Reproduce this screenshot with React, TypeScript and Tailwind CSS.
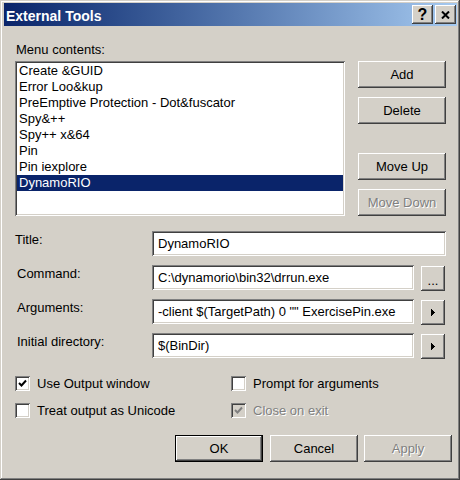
import React from 'react';

const RAISED = 'shadow-[inset_-1px_-1px_#404040,inset_1px_1px_#ffffff,inset_-2px_-2px_#808080,inset_2px_2px_#d4d0c8]';
const DEFAULT_BTN = 'shadow-[inset_0_0_0_1px_#000000,inset_-2px_-2px_#404040,inset_2px_2px_#ffffff,inset_-3px_-3px_#808080]';
const SUNKEN = 'shadow-[inset_1px_1px_#808080,inset_-1px_-1px_#ffffff,inset_2px_2px_#404040,inset_-2px_-2px_#d4d0c8]';
const DISABLED_TEXT = 'text-[#808080] [text-shadow:1px_1px_0_#ffffff]';

const items = [
  'Create &GUID',
  'Error Loo&kup',
  'PreEmptive Protection - Dot&fuscator',
  'Spy&++',
  'Spy++ x&64',
  'Pin',
  'Pin iexplore',
  'DynamoRIO',
];

const Button = ({ label, disabled, isDefault, className = '' }: { label: string; disabled?: boolean; isDefault?: boolean; className?: string }) => (
  <div
    className={`h-[27px] w-[88px] bg-[#d4d0c8] flex items-center justify-center leading-[16px] ${isDefault ? DEFAULT_BTN : RAISED} ${disabled ? DISABLED_TEXT : ''} ${className}`}
  >
    {label}
  </div>
);

const Arrow = () => (
  <svg width="4" height="7" viewBox="0 0 4 7" shapeRendering="crispEdges">
    <path d="M0 0h1v1h1v1h1v1h1v1h-1v1h-1v1h-1v1h-1z" fill="#000" />
  </svg>
);

const Check = ({ color }: { color: string }) => (
  <svg width="9" height="9" viewBox="0 0 9 9">
    <polyline points="1,4 3.5,6.5 8,1.5" fill="none" stroke={color} strokeWidth="2" />
  </svg>
);

const Checkbox = ({ label, checked, disabled }: { label: string; checked?: boolean; disabled?: boolean }) => (
  <div className="flex items-center h-[15px]">
    <div className={`w-[15px] h-[15px] flex items-center justify-center ${SUNKEN} ${disabled ? 'bg-[#d4d0c8]' : 'bg-white'}`}>
      {checked && <Check color={disabled ? '#808080' : '#000'} />}
    </div>
    <span className={`ml-[7px] leading-[16px] whitespace-nowrap ${disabled ? DISABLED_TEXT : ''}`}>{label}</span>
  </div>
);

const Field = ({ label, value, labelPad, width, side }: { label: string; value: string; labelPad: string; width: string; side?: React.ReactNode }) => (
  <div className="flex h-[25px]">
    <div className={`w-[152px] mt-[1px] leading-[16px] ${labelPad}`}>{label}</div>
    <div className={`${width} h-[25px] bg-white ${SUNKEN} flex items-center pl-[6px] leading-[16px] whitespace-nowrap overflow-hidden`}>
      {value}
    </div>
    {side && (
      <div className={`ml-[7px] mt-[1px] w-[24px] h-[25px] bg-[#d4d0c8] ${RAISED} flex items-center justify-center`}>{side}</div>
    )}
  </div>
);

export default function App() {
  return (
    <div className="w-[460px] h-[480px] bg-[#d4d0c8] flex flex-col text-[13px] text-black font-['Liberation_Sans',Arial,sans-serif] shadow-[inset_-1px_-1px_#404040,inset_1px_1px_#d4d0c8,inset_-2px_-2px_#808080,inset_2px_2px_#ffffff]">
      {/* caption */}
      <div className="mt-[3px] ml-[4px] mr-[3px] h-[23px] bg-gradient-to-r from-[#0a246a] to-[#a6caf0] flex items-start">
        <span className="mt-[5px] pl-[2px] text-white font-bold text-[14px] leading-[16px]">External Tools</span>
        <div className="ml-auto mr-[1px] mt-[2px] flex gap-[2px]">
          <div className={`w-[21px] h-[19px] bg-[#d4d0c8] ${RAISED} flex items-center justify-center font-bold text-[16px] leading-none pt-[1px]`}>?</div>
          <div className={`w-[21px] h-[19px] bg-[#d4d0c8] ${RAISED} flex items-center justify-center`}>
            <svg width="9" height="8" viewBox="0 0 9 8">
              <path d="M1 0.5L8 7.5M8 0.5L1 7.5" stroke="#000" strokeWidth="2" />
            </svg>
          </div>
        </div>
      </div>

      <div className="mt-[16px] pl-[16px] leading-[16px]">Menu contents:</div>

      <div className="mt-[3px] pl-[15px] flex">
        <div className={`w-[330px] h-[155px] bg-white ${SUNKEN} p-[2px]`}>
          {items.map((item, i) => (
            <div
              key={item}
              className={`h-[16px] leading-[16px] pl-[2px] whitespace-nowrap overflow-hidden ${i === items.length - 1 ? 'bg-[#0a246a] text-white' : ''}`}
            >
              {item}
            </div>
          ))}
        </div>
        <div className="ml-[13px] flex flex-col">
          <Button label="Add" />
          <Button label="Delete" className="mt-[9px]" />
          <Button label="Move Up" className="mt-[29px]" />
          <Button label="Move Down" disabled className="mt-[9px]" />
        </div>
      </div>

      <div className="mt-[15px] flex flex-col gap-[9px]">
        <Field label="Title:" value="DynamoRIO" labelPad="pl-[15px]" width="w-[294px]" />
        <Field
          label="Command:"
          value={'C:\\dynamorio\\bin32\\drrun.exe'}
          labelPad="pl-[17px]"
          width="w-[262px]"
          side={<span className="leading-none pt-[3px]">...</span>}
        />
        <Field
          label="Arguments:"
          value={'-client $(TargetPath) 0 "" ExercisePin.exe'}
          labelPad="pl-[17px]"
          width="w-[262px]"
          side={<Arrow />}
        />
        <Field label="Initial directory:" value="$(BinDir)" labelPad="pl-[17px]" width="w-[262px]" side={<Arrow />} />
      </div>

      <div className="mt-[18px] flex pl-[15px]">
        <div className="w-[216px]">
          <Checkbox label="Use Output window" checked />
        </div>
        <Checkbox label="Prompt for arguments" />
      </div>
      <div className="mt-[12px] flex pl-[15px]">
        <div className="w-[216px]">
          <Checkbox label="Treat output as Unicode" />
        </div>
        <Checkbox label="Close on exit" checked disabled />
      </div>

      <div className="mt-[17px] flex justify-end pr-[8px]">
        <Button label="OK" isDefault />
        <Button label="Cancel" className="ml-[7px]" />
        <Button label="Apply" disabled className="ml-[6px]" />
      </div>
    </div>
  );
}
